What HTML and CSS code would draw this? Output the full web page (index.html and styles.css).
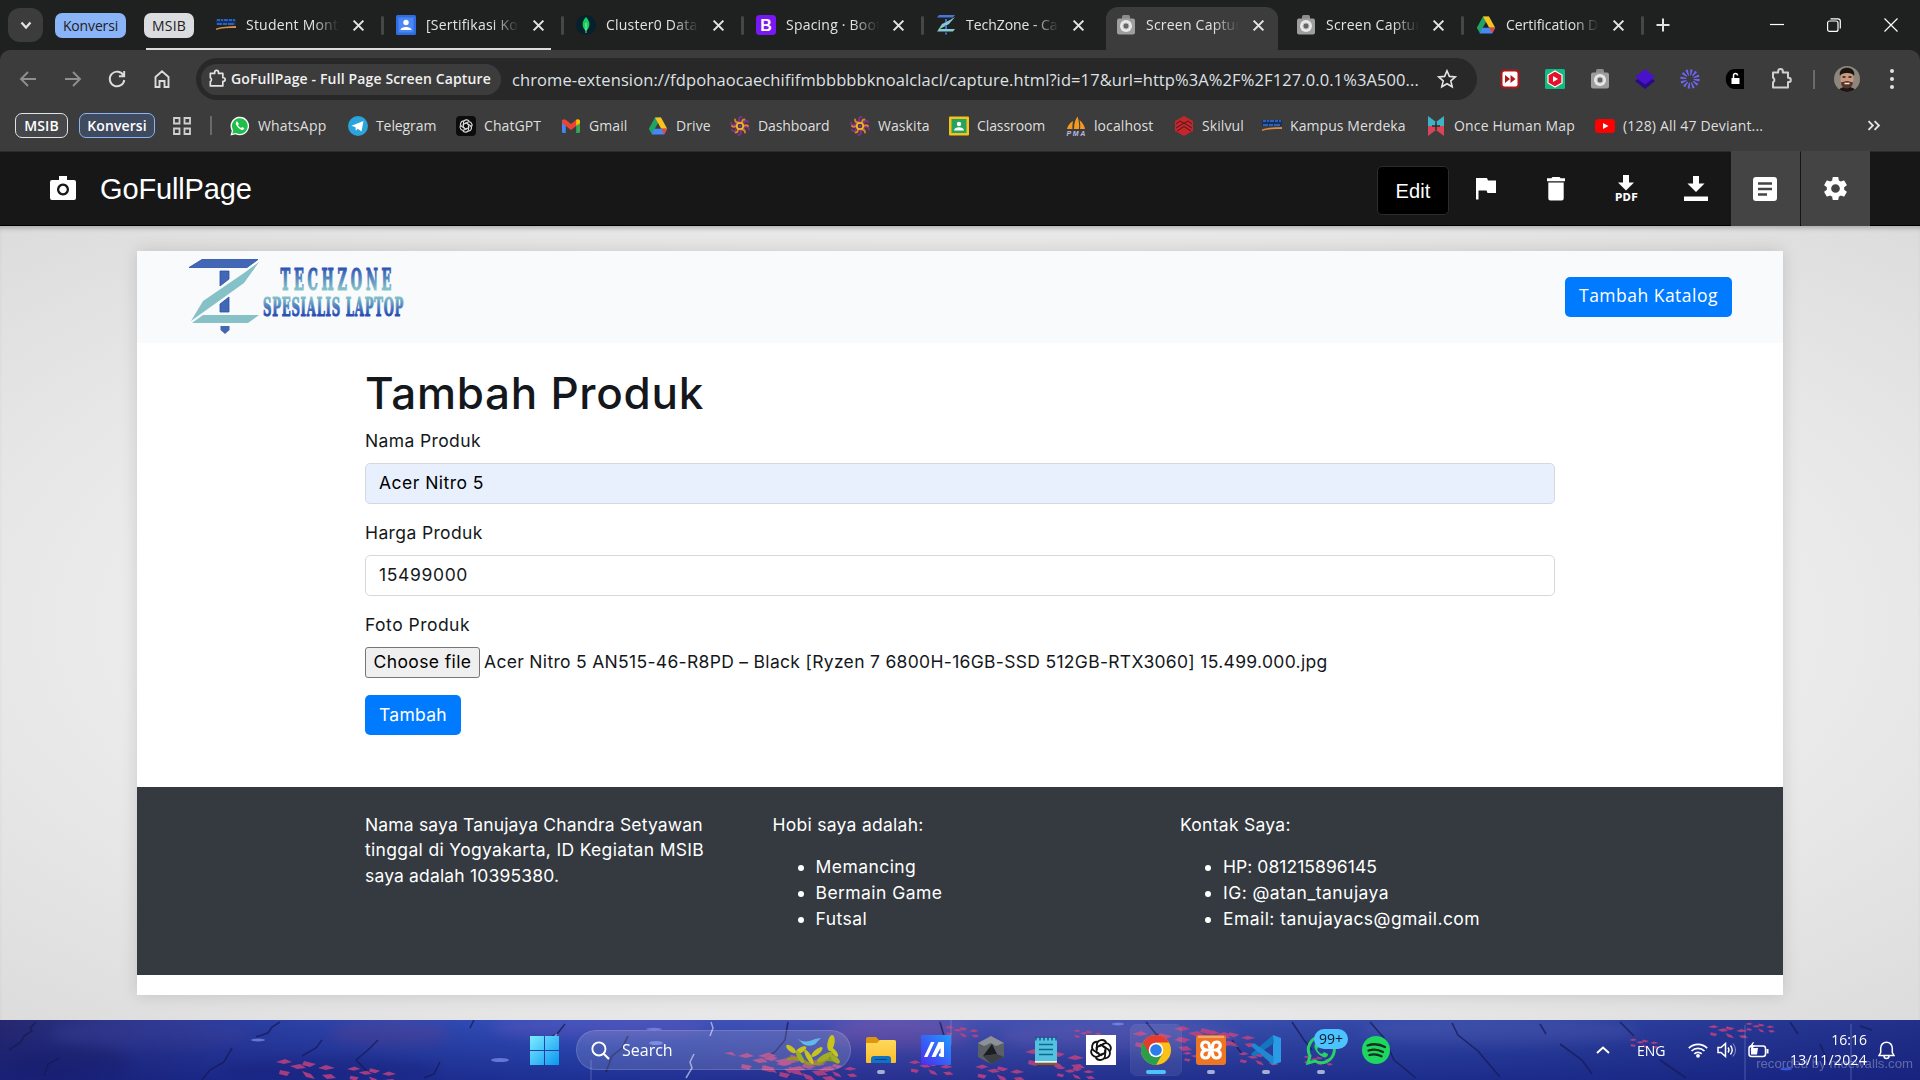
FILE: index.html
```html
<!DOCTYPE html>
<html lang="id">
<head>
<meta charset="utf-8">
<title>GoFullPage</title>
<link rel="stylesheet" href="styles.css">
</head>
<body>
<svg class="defs" width="0" height="0">
  <defs>
    <linearGradient id="gWin" x1="0" y1="0" x2="1" y2="1"><stop offset="0" stop-color="#7cecff"/><stop offset="1" stop-color="#0a96f0"/></linearGradient>
    <linearGradient id="gT1" x1="0" y1="0" x2="0" y2="1"><stop offset=".2" stop-color="#2f55b3"/><stop offset=".8" stop-color="#86c5c9"/></linearGradient>
    <linearGradient id="gT2" x1="0" y1="0" x2="0" y2="1"><stop offset=".2" stop-color="#86c5c9"/><stop offset=".75" stop-color="#2850b5"/></linearGradient>
    <linearGradient id="gMa" x1="0" y1="1" x2="1" y2="0"><stop offset="0" stop-color="#4b2cf0"/><stop offset="1" stop-color="#1f9cff"/></linearGradient>
    <linearGradient id="gFold" x1="0" y1="0" x2="0" y2="1"><stop offset="0" stop-color="#ffd95a"/><stop offset="1" stop-color="#fbbd2b"/></linearGradient>
    <linearGradient id="gSky" x1="0" y1="0" x2="1" y2="0"><stop offset="0" stop-color="#26286f"/><stop offset=".12" stop-color="#2b3da0"/><stop offset=".3" stop-color="#3151bd"/><stop offset=".45" stop-color="#4b52b2"/><stop offset=".6" stop-color="#3c50ae"/><stop offset=".75" stop-color="#3048a8"/><stop offset="1" stop-color="#22308a"/></linearGradient>
    <linearGradient id="gShade" x1="0" y1="0" x2="0" y2="1"><stop offset="0" stop-color="#101a70" stop-opacity="0"/><stop offset="1" stop-color="#101a78" stop-opacity=".6"/></linearGradient>
    <symbol id="x" viewBox="0 0 12 12"><path d="M1.500 1.500l9 9M10.500 1.500l-9 9" stroke="currentColor" stroke-width="1.900" fill="none"/></symbol>
    <symbol id="puzzle" viewBox="0 0 24 24"><path d="M4 6.500h5.200V5.200a2.300 2.300 0 0 1 4.600 0v1.300H19v5.200h.6a2.200 2.200 0 0 1 0 4.400H19V21.500H4v-5.200a2.600 2.600 0 0 0 0-4.600z" fill="none" stroke="currentColor" stroke-width="2" stroke-linejoin="round"/></symbol>
    <symbol id="camera" viewBox="0 0 20 20"><rect x="6" y="0" width="8" height="6" rx="1.500" fill="#8c8c8c"/><rect x="1" y="3.500" width="18" height="16" rx="2" fill="#9e9e9e"/><circle cx="10" cy="11" r="6" fill="#e9e9e9"/><circle cx="10" cy="11" r="3" fill="#666" stroke="#bbb"/></symbol>
    <symbol id="drive" viewBox="0 0 20 20"><path d="M7 1.500h6L10 7 3.800 18 .8 12.800z" fill="#1fa463"/><path d="M7 1.500h6l6.200 11.300h-6z" fill="#fcc31e"/><path d="M6.200 12.800h13l-3 5.700H3.500z" fill="#4688f4"/><path d="M13.200 12.800h6l-3 5.500z" fill="#e8453c"/></symbol>
    <symbol id="gpt" viewBox="0 0 24 24"><g fill="none" stroke="currentColor" stroke-width="1.700"><path d="M8.200 12V7.200a4.600 4.600 0 0 1 8.700-1.900"/><path d="M8.200 12V7.200a4.600 4.600 0 0 1 8.700-1.900" transform="rotate(60 12 12)"/><path d="M8.200 12V7.200a4.600 4.600 0 0 1 8.700-1.900" transform="rotate(120 12 12)"/><path d="M8.200 12V7.200a4.600 4.600 0 0 1 8.700-1.900" transform="rotate(180 12 12)"/><path d="M8.200 12V7.200a4.600 4.600 0 0 1 8.700-1.900" transform="rotate(240 12 12)"/><path d="M8.200 12V7.200a4.600 4.600 0 0 1 8.700-1.900" transform="rotate(300 12 12)"/><path d="M12 7.300l4.100 2.400v4.600L12 16.700l-4.100-2.400V9.700z"/></g></symbol>
    <symbol id="kampus" viewBox="0 0 20 20"><path d="M0 4h20v6H0z" fill="#16305e"/><path d="M1 5h3m1 0h2m1 0h4m1 0h3m1 0h2M1 9h5m1 0h4m1 0h6" stroke="#2a62bd" stroke-width="1.800"/><path d="M0 13.500c6-2 12-2 20-2.500v2c-8 0-14 0-20 2z" fill="#d98c4a"/></symbol>
    <symbol id="swirl" viewBox="0 0 20 20"><g fill="none" stroke-width="1.800" stroke-linecap="round"><g stroke="#84308c"><path d="M10 6c-2-2-1-5 1.500-5M13.500 8c0-3 3-4 4.700-2M14 12c2-2 5-1 5 1.500M10 14c2 2 1 5-1.500 5M6.500 12c0 3-3 4-4.700 2M6 8C4 10 1 9 1 6.500"/></g><g stroke="#d9852c"><path d="M12 6.500c0-2 1-3 2.500-3M14 10c1.500-1 3-1 4 0M12 13.500c1.500 0 3 1 3 3M8 13.500c0 2-1 3-2.500 3M6 10c-1.500 1-3 1-4 0M8 6.500c-1.500 0-3-1-3-3"/></g></g><circle cx="10" cy="10" r="3.200" fill="none" stroke="#f5b52e" stroke-width="1.700"/><circle cx="10" cy="10" r="1.200" fill="#8b2f8f"/></symbol>
    <symbol id="wa" viewBox="0 0 20 20"><path d="M.5 19.500l1.300-4.800A9.300 9.300 0 1 1 5.500 18.200z" fill="#fff"/><path d="M2.300 17.700l.9-3.300A7.900 7.900 0 1 1 6 17z" fill="#1fbe4b"/><path d="M7 5.300c-1.300.5-1.500 2-.8 3.500 1 2.200 2.700 4 5 4.900 1.600.6 2.800 0 3.200-1.400l-2.200-1.300-1.100 1C9.700 11.500 8.500 10.200 8 9l.9-1.100z" fill="#fff"/></symbol>
    <symbol id="leaves" viewBox="0 0 60 24" overflow="visible"><path d="M0 6l9-3 7 3-8 2zM14 10l10-2 6 4-9 1zM28 5l12 3-6 3-8-2zM4 14l10 2-3 4-8-2zM26 15l9 3 4 5-9-2zM42 12l8-3 9 3-9 2zM46 19l9-1 5 4-9 1z"/></symbol>
  </defs>
</svg>

<div class="tabstrip">
  <span class="tabsearch"><svg width="12" height="9" viewBox="0 0 12 9"><path d="M1.500 1.500L6 6.500l4.500-5" fill="none" stroke="#e3e3e3" stroke-width="2.200"/></svg></span>
  <span class="group blue">Konversi</span>
  <span class="group grey">MSIB</span>
  <div class="tabs">
    <div class="tab grouped first"><svg class="fav"><use href="#kampus"/></svg><span class="title">Student Mont</span><svg class="close"><use href="#x"/></svg></div>
    <div class="tab grouped second"><svg class="fav" viewBox="0 0 20 20"><rect width="20" height="20" rx="1.500" fill="#2f6de0"/><rect x="2.500" y="2.500" width="15" height="15" fill="#4a86f5"/><circle cx="10" cy="7.500" r="2.700" fill="#fff"/><path d="M4.500 15c0-4 11-4 11 0z" fill="#fff"/></svg><span class="title">[Sertifikasi Kon</span><svg class="close"><use href="#x"/></svg></div>
    <div class="tab"><svg class="fav" viewBox="0 0 20 20"><circle cx="10" cy="10" r="10" fill="#06202c"/><path d="M10 2c5 5 4 11 0 14-4-3-5-9 0-14z" fill="#13cf5c"/><path d="M10 8v10" stroke="#b9f0c8" stroke-width=".8"/></svg><span class="title">Cluster0 Data</span><svg class="close"><use href="#x"/></svg></div>
    <div class="tab"><svg class="fav" viewBox="0 0 20 20"><rect width="20" height="20" rx="3.500" fill="#7a18f5"/><text x="10" y="16" text-anchor="middle" class="bs">B</text></svg><span class="title">Spacing · Boot</span><svg class="close"><use href="#x"/></svg></div>
    <div class="tab nosep"><svg class="fav" viewBox="0 0 20 20"><path d="M3 0h16l-2 2.500H1z" fill="#4a74d8"/><path d="M19 2L13 9l-11 6 4-6 8-4zM3 14h16l-2 2.500H1z" fill="#86c9d0"/><path d="M10 4v3M10 10v4M10 17.500v2" stroke="#4a74d8" stroke-width="1.800"/></svg><span class="title tight">TechZone - Ca</span><svg class="close"><use href="#x"/></svg></div>
    <div class="tab active nosep"><svg class="fav"><use href="#camera"/></svg><span class="title">Screen Captur</span><svg class="close"><use href="#x"/></svg></div>
    <div class="tab"><svg class="fav"><use href="#camera"/></svg><span class="title">Screen Captur</span><svg class="close"><use href="#x"/></svg></div>
    <div class="tab"><svg class="fav"><use href="#drive"/></svg><span class="title tight">Certification D</span><svg class="close"><use href="#x"/></svg></div>
  </div>
  <svg class="plus" viewBox="0 0 14 14"><path d="M7 .5v13M.5 7h13" stroke="#e3e3e3" stroke-width="2"/></svg>
  <div class="wincontrols">
    <svg width="14" height="14" viewBox="0 0 14 14"><path d="M0 6.500h14" stroke="#fff" stroke-width="1.200"/></svg>
    <svg width="14" height="14" viewBox="0 0 14 14"><rect x=".6" y="3" width="10.400" height="10.400" rx="2" fill="none" stroke="#fff" stroke-width="1.200"/><path d="M3.500 .8H11A2.300 2.300 0 0 1 13.300 3v7.500" fill="none" stroke="#fff" stroke-width="1.200"/></svg>
    <svg width="14" height="14" viewBox="0 0 14 14"><path d="M.5 .5l13 13M13.500 .5l-13 13" stroke="#fff" stroke-width="1.200"/></svg>
  </div>
</div>

<div class="toolbar">
  <div class="navicons">
    <svg class="dim" viewBox="0 0 20 20"><path d="M18 10H3M10 3l-7 7 7 7" /></svg>
    <svg class="dim" viewBox="0 0 20 20"><path d="M2 10h15M10 3l7 7-7 7"/></svg>
    <svg viewBox="0 0 20 20"><path d="M16.500 6.500A7.300 7.300 0 1 0 17.300 11M17.200 2v5.300h-5.300"/></svg>
    <svg viewBox="0 0 20 20"><path d="M3.500 8L10 2.300 16.500 8v10h-4v-6h-5v6h-4z"/></svg>
  </div>
  <div class="omnibox">
    <span class="extchip"><svg class="pz" viewBox="0 0 24 24"><use href="#puzzle"/></svg>GoFullPage - Full Page Screen Capture</span>
    <span class="url">chrome-extension://fdpohaocaechififmbbbbbknoalclacl/capture.html?id=17&amp;url=http%3A%2F%2F127.0.0.1%3A500...</span>
    <svg class="star" viewBox="0 0 20 20"><path d="M10 1.800l2.400 5.600 6 .5-4.600 4 1.400 5.900L10 14.700l-5.200 3.100 1.400-5.900-4.600-4 6-.5z" fill="none" stroke="#e3e3e3" stroke-width="1.600"/></svg>
  </div>
  <div class="exts">
    <svg viewBox="0 0 20 20"><rect x=".5" y=".5" width="19" height="19" rx="4" fill="#b3161a"/><rect x="2.500" y="2.500" width="15" height="15" rx="2" fill="#fff"/><path d="M5 6l5 4-5 4zM10.500 6l5 4-5 4z" fill="#b3161a"/></svg>
    <svg viewBox="0 0 20 20"><rect width="20" height="20" rx="1.500" fill="#12b981"/><path d="M10 2l7 4v8l-7 4-7-4V6z" fill="#e5102a" stroke="#fff" stroke-width="1.200"/><path d="M8 7l5 3-5 3z" fill="#fff"/></svg>
    <svg viewBox="0 0 20 20"><use href="#camera"/></svg>
    <svg viewBox="0 0 20 20"><path d="M10 5l10 7-10 8-10-8z" fill="#2a0a86"/><path d="M10 0l10 8-10 7.500L0 8z" fill="#4a12c8"/></svg>
    <svg viewBox="0 0 20 20"><circle cx="10" cy="10" r="6.700" fill="none" stroke="#6d66f5" stroke-width="6" stroke-dasharray="1.700 1.810"/></svg>
    <svg viewBox="0 0 20 20"><path d="M9 0h10v20H9C-2 19-2 1 9 0z" fill="#000"/><rect x="6.500" y="9" width="8" height="6" fill="#fff"/><path d="M8.500 9V6.500a2 2 0 0 1 4 0" fill="none" stroke="#fff" stroke-width="1.500"/></svg>
    <svg class="pzbig" viewBox="0 0 24 24"><use href="#puzzle"/></svg>
  </div>
  <span class="vsep"></span>
  <svg class="avatar" viewBox="0 0 26 26"><clipPath id="av"><circle cx="13" cy="13" r="13"/></clipPath><g clip-path="url(#av)"><rect width="26" height="26" fill="#8d867c"/><path d="M4 26c1-7 17-7 18 0z" fill="#1c1614"/><ellipse cx="13" cy="13" rx="6.500" ry="8.500" fill="#c99a80"/><path d="M6 10C3 -1 23 -1 20 10c-1-4-13-4-14 0z" fill="#1b1512"/><path d="M8.500 11h3m3 0h3" stroke="#2a1a14" stroke-width="1.500"/><path d="M7 16c1 1 3-1 6-1s5 2 6 1c0 8-12 9-12 0z" fill="#5a3527"/><path d="M10.500 17.500h5" stroke="#eee" stroke-width="1.300"/></g></svg>
  <svg class="dots" viewBox="0 0 4 22"><circle cx="2" cy="3" r="2"/><circle cx="2" cy="11" r="2"/><circle cx="2" cy="19" r="2"/></svg>
</div>

<div class="bookmarks">
  <span class="pill p1">MSIB</span>
  <span class="pill p2">Konversi</span>
  <svg class="gridicon" viewBox="0 0 18 18"><path d="M1 1h5.500v5.500H1zM11.500 1H17v5.500h-5.500zM1 11.500h5.500V17H1zM11.500 11.500H17V17h-5.500z" fill="none" stroke="#d0d0d0" stroke-width="1.800"/></svg>
  <span class="vsep"></span>
  <div class="marks">
    <span class="mark wide"><svg><use href="#wa"/></svg>WhatsApp</span>
    <span class="mark tight"><svg viewBox="0 0 20 20"><circle cx="10" cy="10" r="10" fill="#2ba3dc"/><path d="M3.500 9.800L15.500 5l-2 10.500-3.700-2.700-2 2-.3-3.500z" fill="#fff"/></svg>Telegram</span>
    <span class="mark"><svg viewBox="0 0 20 20" color="#ddd"><rect width="20" height="20" rx="4" fill="#0c0c0c"/><use href="#gpt" x="2" y="2" width="16" height="16"/></svg>ChatGPT</span>
    <span class="mark"><svg viewBox="0 0 20 20"><path d="M1 4h3.800v13H2.500Q1 17 1 15.500z" fill="#4285f4"/><path d="M15.200 4H19v11.500q0 1.500-1.500 1.500h-2.300z" fill="#34a853"/><path d="M1 5q1-3 3.800-1.200L10 8l5.200-4.200Q18 2 19 5v2l-9 7-9-7z" fill="#ea4335"/><path d="M15.200 3.800Q18 2 19 5v2.200l-3.800 2.600z" fill="#fbbc04"/></svg>Gmail</span>
    <span class="mark"><svg><use href="#drive"/></svg>Drive</span>
    <span class="mark tight"><svg><use href="#swirl"/></svg>Dashboard</span>
    <span class="mark"><svg><use href="#swirl"/></svg>Waskita</span>
    <span class="mark tight"><svg viewBox="0 0 20 20"><rect width="20" height="19" y=".5" rx="1" fill="#f8c21a"/><rect x="2.500" y="3" width="15" height="14" fill="#24a45c"/><circle cx="10" cy="8" r="2.200" fill="#fff"/><path d="M5 14.500c0-4.500 10-4.500 10 0z" fill="#fff"/></svg>Classroom</span>
    <span class="mark"><svg viewBox="0 0 20 20"><path d="M8 13c0-5 1-9 3.500-12.500C13 5 13.500 9 13 13zM14 13c.5-4 0-7-.5-9 3 2.500 5 5.500 5.500 9zM1 13c1-4 3-6 6-8-.5 3-.7 5-.5 8z" fill="#f39a1e"/><text x="10" y="19.500" text-anchor="middle" textLength="19" class="pma">PMA</text></svg>localhost</span>
    <span class="mark"><svg viewBox="0 0 20 20"><path d="M10 0l9 5v10l-9 5-9-5V5z" fill="#c4262b"/><path d="M2 8l4-3 4 2.500L14 5l4 3M2 12l8-5 8 5M3 15l7-4.500 7 4.500" fill="none" stroke="#4b1a1c" stroke-width="1"/></svg>Skilvul</span>
    <span class="mark"><svg><use href="#kampus"/></svg>Kampus Merdeka</span>
    <span class="mark wide"><svg viewBox="0 0 20 20"><path d="M2 0l8 6 8-6v10H2z" fill="#3fb3c4"/><path d="M2 20l8-6 8 6V10H2z" fill="#d8455a"/><path d="M6 10h8M10 6v8" stroke="#2b2b2b" stroke-width="1.500"/></svg>Once Human Map</span>
    <span class="mark wide"><svg viewBox="0 0 20 20"><rect y="3" width="20" height="14" rx="3.500" fill="#f00"/><path d="M8 7l5.500 3L8 13z" fill="#fff"/></svg>(128) All 47 Deviant...</span>
  </div>
  <svg class="more" viewBox="0 0 12 10"><path d="M1 1l4 4-4 4M6.500 1l4 4-4 4" fill="none" stroke="#e3e3e3" stroke-width="1.700"/></svg>
</div>

<header class="apphead">
  <svg class="cam" viewBox="0 0 26 24"><path fill-rule="evenodd" d="M9 0h8v4h7q2 0 2 2v16q0 2-2 2H2q-2 0-2-2V6q0-2 2-2h7zM13 7.500a6 6 0 1 0 .01 0zM13 9.800a3.700 3.700 0 1 1-.01 0z" fill="#fff"/></svg>
  <span class="brand">GoFullPage</span>
  <button class="edit">Edit</button>
  <div class="tools">
    <span><svg width="22" height="23" viewBox="0 0 22 23"><path d="M1 1h11l1 2.500h8V16h-8.500l-1-2.500H3.500V22.500H1z" fill="#fff"/></svg></span>
    <span><svg width="18" height="24" viewBox="0 0 18 24"><path d="M5.500 0h7l1.200 1.200H18v3H0v-3h4.300zM1.300 5.500h15.400V21.500q0 2-2 2H3.300q-2 0-2-2z" fill="#fff"/></svg></span>
    <span><svg width="24" height="27" viewBox="0 0 24 27"><path d="M9 0h6v7.500h5l-8 8-8-8h5z" fill="#fff"/><text x="1" y="26" textLength="23" class="pdf">PDF</text></svg></span>
    <span><svg width="24" height="26" viewBox="0 0 24 26"><path d="M9 0h6v7.500h5.500L12 16 3.500 7.500H9zM0 20.500h24V25H0z" fill="#fff"/></svg></span>
    <span class="lit"><svg width="24" height="24" viewBox="0 0 24 24"><path fill-rule="evenodd" d="M3 0h18q3 0 3 3v18q0 3-3 3H3q-3 0-3-3V3q0-3 3-3zM5 5.300v2.400h14V5.300zM5 10.800v2.400h14v-2.400zM5 16.300v2.400h9v-2.400z" fill="#fff"/></svg></span>
    <span class="lit"><svg width="29" height="29" viewBox="0 0 24 24"><path fill="#fff" d="M19.140 12.940c.04-.3.060-.61.060-.94s-.02-.64-.07-.94l2.030-1.580a.49.49 0 0 0 .12-.61l-1.920-3.320a.488.488 0 0 0-.59-.22l-2.390.96c-.5-.38-1.030-.7-1.620-.94l-.36-2.540a.484.484 0 0 0-.48-.41h-3.840c-.24 0-.43.17-.47.41l-.36 2.540c-.59.24-1.130.57-1.620.94l-2.390-.96a.48.48 0 0 0-.59.22L2.740 8.870c-.12.21-.08.47.12.61l2.030 1.580c-.05.3-.09.63-.09.94s.02.64.07.94l-2.030 1.580a.49.49 0 0 0-.12.61l1.920 3.320c.12.22.37.29.59.22l2.390-.96c.5.38 1.030.7 1.620.94l.36 2.540c.05.24.24.41.48.41h3.840c.24 0 .44-.17.47-.41l.36-2.540c.59-.24 1.130-.56 1.620-.94l2.390.96c.22.08.47 0 .59-.22l1.920-3.320a.48.48 0 0 0-.12-.61zM12 15.600A3.600 3.600 0 1 1 12 8.400a3.600 3.600 0 0 1 0 7.200z"/></svg></span>
  </div>
</header>

<main class="canvas">
  <div class="shot">
    <nav class="navbar">
      <svg class="logo" width="220" height="92" viewBox="185 251 220 92">
        <path d="M189 267.500L202 259.500h56l-11 8z" fill="#4367b5" stroke="#2450ae" stroke-width=".8"/>
        <path d="M220 271h9v8l-9 7zM229 297v15h-9v-8z" fill="#4367b5" stroke="#2450ae" stroke-width=".8"/>
        <path d="M259 262L244 283l-53 38 12-20 41-28z" fill="#86c1c7"/>
        <path d="M203 315h56l-11 8h-56z" fill="#86c1c7"/>
        <path d="M220.500 326h9v4l-4.500 4-4.500-4z" fill="#4367b5"/>
        <text class="lt" fill="url(#gT1)" stroke="url(#gT1)" textLength="154" transform="translate(280.500 289.500) scale(.72 1.530)">TECHZONE</text>
        <text class="lt" fill="url(#gT2)" stroke="url(#gT2)" textLength="216" transform="translate(263 315.500) scale(.65 1.330)">SPESIALIS LAPTOP</text>
      </svg>
      <a class="btn katalog">Tambah Katalog</a>
    </nav>
    <section class="form">
      <h1>Tambah Produk</h1>
      <label>Nama Produk</label>
      <div class="input filled">Acer Nitro 5</div>
      <label>Harga Produk</label>
      <div class="input price">15499000</div>
      <label class="foto">Foto Produk</label>
      <div class="file"><span class="choose">Choose file</span><span class="fname">Acer Nitro 5 AN515-46-R8PD – Black [Ryzen 7 6800H-16GB-SSD 512GB-RTX3060] 15.499.000.jpg</span></div>
      <a class="btn submit">Tambah</a>
    </section>
    <footer class="foot">
      <div><p class="bio">Nama saya Tanujaya Chandra Setyawan<br><span class="l2">tinggal di Yogyakarta, ID Kegiatan MSIB</span><br>saya adalah 10395380.</p></div>
      <div><p>Hobi saya adalah:</p><ul><li>Memancing</li><li>Bermain Game</li><li>Futsal</li></ul></div>
      <div><p>Kontak Saya:</p><ul><li class="hp">HP: 081215896145</li><li>IG: @atan_tanujaya</li><li>Email: tanujayacs@gmail.com</li></ul></div>
    </footer>
  </div>
</main>

<div class="taskbar">
  <svg class="wall" viewBox="0 0 1920 60" preserveAspectRatio="none">
    <rect width="1920" height="60" fill="url(#gSky)"/>
    <g class="clouds"><ellipse cx="150" cy="15" rx="100" ry="16" fill="#46479c"/><ellipse cx="390" cy="14" rx="60" ry="14" fill="#6a4790"/><ellipse cx="600" cy="8" rx="110" ry="12" fill="#7a5fc0"/><ellipse cx="900" cy="14" rx="70" ry="16" fill="#9a5fae"/><ellipse cx="1120" cy="18" rx="120" ry="16" fill="#7a6ac0"/><ellipse cx="1500" cy="12" rx="140" ry="14" fill="#5e66b8"/><ellipse cx="330" cy="50" rx="110" ry="12" fill="#1b1f70"/><ellipse cx="70" cy="44" rx="60" ry="18" fill="#1a1c5c"/></g>
    <rect width="1920" height="60" fill="url(#gShade)"/>
    <g fill="none" stroke="#171b55" stroke-width="1.600" opacity=".75"><path d="M36 2l-6 6 2 3-8 5-3 6-12 8M60 38l-12 6-4 12M280 2l-8 5-4 6-12 4M322 20l-6 8-14 8M378 20l-10 10-12 10 14 14M232 28l-8 14-14 8-8 10M474 0l-4 8M440 42l-6 12-10 4M565 4l-8 10-8 4M628 16l-6 12-10 8-6 16M788 2l-3 18-10 12-10 6M940 2l4 14-6 10"/><path d="M1146 2l10 12 10 6M1232 20l10 14M1292 2l12 18 8 10M1370 2l14 16 10 22 22 18M1452 3l6 12 20 16 22 26M1540 4l6 10M1560 24l22 16 10 14M1620 2l14 14M1660 40l26 18M1790 2l8 12M1820 24l8 18M1860 6l12 4"/></g>
    <g fill="none" stroke="#c9cdee" stroke-width="1.500" opacity=".7"><path d="M557 14l-6 6M711 2l2 6-3 8M694 34l-4 8 2 6-6 10"/></g>
    <g fill="#c8437f" opacity=".8">
      <use href="#leaves" x="276" y="36" width="60" height="24"/><use href="#leaves" x="342" y="44" width="60" height="20"/>
      <use href="#leaves" x="738" y="30" width="60" height="24"/><use href="#leaves" x="758" y="28" width="70" height="30"/><use href="#leaves" x="776" y="38" width="60" height="24"/><use href="#leaves" x="812" y="40" width="46" height="18"/>
      <path d="M724 33l8-1 4 4z"/>
      <use href="#leaves" x="942" y="4" width="40" height="14"/><use href="#leaves" x="908" y="38" width="46" height="18"/><use href="#leaves" x="972" y="42" width="56" height="20"/>
      <use href="#leaves" x="1020" y="26" width="70" height="24"/><use href="#leaves" x="1056" y="8" width="64" height="12"/><use href="#leaves" x="1050" y="44" width="50" height="16"/>
      <use href="#leaves" x="1132" y="8" width="60" height="24"/><use href="#leaves" x="1174" y="3" width="60" height="24"/><use href="#leaves" x="1206" y="8" width="50" height="20"/><use href="#leaves" x="1170" y="30" width="60" height="14"/><use href="#leaves" x="1236" y="30" width="44" height="16"/><use href="#leaves" x="1296" y="34" width="44" height="12"/>
      <use href="#leaves" x="1616" y="17" width="56" height="12"/><use href="#leaves" x="1708" y="3" width="40" height="16"/><use href="#leaves" x="1740" y="1" width="40" height="12"/>
    </g>
    <g fill="#7f92ee" opacity=".7"><ellipse cx="258" cy="20" rx="7" ry="1.500"/><ellipse cx="500" cy="40" rx="9" ry="2"/><ellipse cx="656" cy="23" rx="7" ry="2"/><ellipse cx="654" cy="9" rx="8" ry="1.200"/><ellipse cx="1118" cy="4" rx="6" ry="1.500"/><ellipse cx="1786" cy="49" rx="6" ry="1.500" fill="#4466ff"/></g>
    <g stroke="#9aa8e8" opacity=".4"><path d="M591 40v20M951 0v25M1745 5v55M1851 4v56"/></g>
  </svg>
  <svg class="start" viewBox="0 0 29 29"><path d="M0 0h14v14H0zM15 0h14v14H15zM0 15h14v14H0zM15 15h14v14H15z" fill="url(#gWin)"/></svg>
  <div class="search">
    <svg class="lens" viewBox="0 0 18 18"><circle cx="7.500" cy="7.500" r="6.200" fill="none" stroke="#fff" stroke-width="1.800"/><path d="M12 12l5 5" stroke="#fff" stroke-width="2"/></svg>
    <span>Search</span>
    <svg class="bird" viewBox="0 0 56 30"><path d="M2 24q12-2 20 4 10 3 16-2 8-4 16 2" stroke="#8f9a1c" stroke-width="3" fill="none"/><g fill="#c8c41e"><ellipse cx="46" cy="8" rx="3.500" ry="8" transform="rotate(10 46 8)"/><ellipse cx="6" cy="14" rx="6" ry="2.500" transform="rotate(40 6 14)"/><ellipse cx="16" cy="15" rx="6" ry="2.500" transform="rotate(-30 16 15)"/><ellipse cx="24" cy="22" rx="8" ry="2.500" transform="rotate(60 24 22)"/><ellipse cx="32" cy="17" rx="7" ry="2.500" transform="rotate(-40 32 17)"/><ellipse cx="49" cy="17" rx="6" ry="2.200" transform="rotate(50 49 17)"/></g><g fill="#9fae22"><ellipse cx="15" cy="22" rx="7" ry="2.500" transform="rotate(60 15 22)"/><ellipse cx="40" cy="22" rx="9" ry="3" transform="rotate(-30 40 22)"/><ellipse cx="50" cy="24" rx="6" ry="2.500" transform="rotate(40 50 24)"/></g><path d="M12 3c5 5 12 4 18 1l6-1-4 4c-3 5-12 5-16 0z" fill="#62b9e8"/></svg>
  </div>
  <div class="apps">
    <span class="app run"><svg viewBox="0 0 30 30"><path d="M0 4q0-2 2-2h8l3 3h15q2 0 2 2v4H0z" fill="#e0960c"/><path d="M0 8h11l3-3h14q2 0 2 2v20q0 1-1 1H1q-1 0-1-1z" fill="url(#gFold)"/><path d="M5 28v-4q0-3 3-3h14q3 0 3 3v4z" fill="#0f72c4"/><path d="M9 24.500h12" stroke="#06457f"/></svg></span>
    <span class="app"><svg viewBox="0 0 30 30"><rect width="30" height="30" fill="url(#gMa)"/><path d="M3 22L10 7h3.500L6.500 22zM10.500 22l7-15H23v15h-3.500v-9l-5 9z" fill="#fff"/><circle cx="19.500" cy="20" r="1.700" fill="#fff"/></svg></span>
    <span class="app"><svg viewBox="0 0 30 30"><path d="M15 1l13 7v14l-13 7L2 22V8z" fill="#5a6066"/><path d="M15 1l13 7-8 3-5-3-7 3-6-3z" fill="#8b9197"/><path d="M16 9L7 21l14-2z" fill="#1b1d20"/><path d="M21 19l7 3-13 7-8-8z" fill="#3c4045"/></svg></span>
    <span class="app"><svg viewBox="0 0 30 30"><rect x="4" y="26" width="22" height="4" rx="1" fill="#a2510e"/><rect x="4" y="3" width="22" height="25" rx="1.500" fill="#54c1de"/><path d="M4 26h22v1.500H4z" fill="#eef"/><path d="M5 1.500v4M9 1.500v4M13 1.500v4M17 1.500v4M21 1.500v4M25 1.500v4" stroke="#0e5c86" stroke-width="1.500"/><path d="M8 9.500h14M8 14.500h14M8 19.500h14" stroke="#0e6a94" stroke-width="1.600"/></svg></span>
    <span class="app"><svg viewBox="0 0 30 30" color="#111"><rect width="30" height="30" fill="#fff"/><use href="#gpt" x="2" y="2" width="26" height="26"/></svg></span>
    <span class="app act"><svg viewBox="0 0 30 30"><circle cx="15" cy="15" r="15" fill="#fbc116"/><path d="M2 7.500A15 15 0 0 0 15 30l6.500-11.200L15 15z" fill="#2a9e4a"/><path d="M2 7.500L8.500 19l2-8L15 7.500h13A15 15 0 0 0 2 7.500z" fill="#e33b2e"/><circle cx="15" cy="15" r="7.300" fill="#fff"/><circle cx="15" cy="15" r="5.800" fill="#2b7de9"/></svg></span>
    <span class="app run"><svg viewBox="0 0 30 30"><rect width="30" height="30" rx="3" fill="#ee7623"/><path d="M2 2h26" stroke="#f6b48a" stroke-width="1.500"/><path d="M9.500 15C4 13 5 7 9.500 7c3.500 0 4 3 4 5h3c0-2 .5-5 4-5 4.500 0 5.500 6 0 8 5.500 2 4.500 8 0 8-3.500 0-4-3-4-5h-3c0 2-.5 5-4 5C5 23 4 17 9.500 15zM9.500 15h11" fill="none" stroke="#fff" stroke-width="3.200" stroke-linejoin="round"/></svg></span>
    <span class="app run"><svg viewBox="0 0 30 30"><path d="M22 0l8 3v24l-8 3z" fill="#2b9be6"/><path d="M22 0L0 19l3 3 20-14z" fill="#1277c0"/><path d="M22 30L0 11l3-3 20 14z" fill="#1e88d2"/></svg></span>
    <span class="app run"><svg viewBox="0 0 30 30"><path d="M2 28l2-7A13 13 0 1 1 9 26z" fill="none" stroke="#27d366" stroke-width="3"/><path d="M10 8c-2 1-2 4-1 6 2 4 4 6 8 8 2 1 5 0 5-3l-4-2-2 2c-3-1-4-3-5-5l2-2z" fill="#27d366"/></svg><b class="badge">99+</b></span>
    <span class="app"><svg viewBox="0 0 30 30"><circle cx="15" cy="15" r="14" fill="#1ed760"/><path d="M6.500 10.500c6-2 12-1.500 17.500 1.500M7.500 15.500c5-1.500 10-1 14.500 1.500M8.500 20c4-1 8-.7 12 1.300" fill="none" stroke="#12301c" stroke-width="2.300" stroke-linecap="round"/></svg></span>
  </div>
  <div class="tray">
    <svg class="chev" width="14" height="8" viewBox="0 0 14 8"><path d="M1 7l6-5.500L13 7" fill="none" stroke="#fff" stroke-width="2"/></svg>
    <span class="eng">ENG</span>
    <svg class="wifi" width="20" height="16" viewBox="0 0 20 16"><g fill="none" stroke="#fff" stroke-width="1.700"><path d="M.8 6.200a13 13 0 0 1 18.400 0M3.500 9a9.200 9.200 0 0 1 13 0M6.300 11.800a5.300 5.300 0 0 1 7.400 0"/></g><circle cx="10" cy="13.800" r="1.900" fill="#fff"/></svg>
    <svg class="vol" width="20" height="16" viewBox="0 0 20 16"><path d="M1 5.500h3L8.500 1.500v13L4 10.500H1z" fill="none" stroke="#fff" stroke-width="1.500"/><path d="M11 5.500q2 2.500 0 5M13.500 3.500q3.500 4.500 0 9" fill="none" stroke="#fff" stroke-width="1.400"/><path d="M16 1.500q5 6.500 0 13" fill="none" stroke="#8e97cf"/></svg>
    <svg class="bat" width="21" height="17" viewBox="0 0 21 17"><rect x="1" y="4" width="16.500" height="10.500" rx="2.500" fill="none" stroke="#fff" stroke-width="1.500"/><path d="M3 6h7l-1 6.500H3z" fill="#fff"/><path d="M18.500 7v4.500h2V7z" fill="#fff"/><path d="M5 0L1 5.500h2.500L2.500 9 7 3.500H4.500L6 0z" fill="#fff"/></svg>
    <div class="clock"><span>16:16</span><span class="date">13/11/2024</span></div>
    <svg class="bell" width="17" height="19" viewBox="0 0 17 19"><path d="M1 14.500l1.700-3V7a5.800 5.800 0 0 1 11.600 0v4.500l1.700 3zM6 15a2.500 2.500 0 0 0 5 0" fill="none" stroke="#fff" stroke-width="1.500"/></svg>
  </div>
  <span class="watermark">recorded by moewalls.com</span>
</div>
</body>
</html>
```
FILE: styles.css
```css
* { box-sizing: border-box; }
body { margin: 0; width: 1920px; height: 1080px; overflow: hidden; display: flex; flex-direction: column; background: #1f2020; font-family: "Open Sans", "Noto Sans", sans-serif; white-space: nowrap; }
svg { display: block; flex: none; }
.defs { position: absolute; }

.tabstrip { height: 50px; flex: none; display: flex; background: #1f2020; color: #e3e3e3; font-size: 14px; padding-left: 8px; align-items: flex-start; }
.tabsearch { width: 35px; height: 34px; margin-top: 8px; border-radius: 12px; background: #3c3c3c; display: grid; place-items: center; }
.group { height: 25px; margin-top: 13px; border-radius: 7px; display: grid; place-items: center; color: #1f2020; padding-bottom: 1px; }
.group.blue { width: 71px; margin-left: 12px; background: #8ab4f8; letter-spacing: -.15px; }
.group.grey { width: 50px; margin-left: 18px; background: #dadce0; letter-spacing: .15px; }
.tabs { display: flex; margin-left: 12px; height: 50px; }
.tab { width: 180px; height: 50px; padding: 0 0 0 10px; display: flex; align-items: center; position: relative; }
.tab::after { content: ""; position: absolute; left: 175px; top: 16px; width: 3px; height: 19px; background: #454746; border-radius: 2px; }
.tab.nosep::after { display: none; }
.tab.grouped::before { content: ""; position: absolute; height: 2px; bottom: 0; background: #dadce0; left: 0; right: 0; }
.tab.first::before { left: -60px; }
.tab.second::before { right: 15px; }
.fav { width: 20px; height: 20px; }
.title { width: 93px; margin-left: 10px; overflow: hidden; height: 22px; line-height: 22px; letter-spacing: .22px; -webkit-mask-image: linear-gradient(90deg, #000 72%, transparent); mask-image: linear-gradient(90deg, #000 72%, transparent); }
.tight { letter-spacing: -.05px; }
.close { width: 13px; height: 13px; margin-left: 13px; color: #e3e3e3; }
.tab.active { background: #3c3c3c; width: 172px; margin: 7px 8px 0 0; height: 43px; border-radius: 12px 12px 0 0; padding-bottom: 7px; }
.bs { font: 700 16px "Liberation Sans", sans-serif; fill: #fff; }
.plus { width: 14px; height: 14px; margin: 18px 0 0 10px; }
.wincontrols { display: flex; gap: 43px; margin: 18px 0 0 100px; }

.toolbar { height: 58px; flex: none; background: #3c3c3c; display: flex; align-items: center; border-radius: 10px 10px 0 0; }
.navicons { display: flex; gap: 24.600px; padding-left: 18px; width: 196px; }
.navicons svg { width: 20px; height: 20px; fill: none; stroke: #dcdcdc; stroke-width: 1.900; }
.navicons .dim { stroke: #8f8f8f; }
.omnibox { width: 1281px; height: 42px; border-radius: 21px; background: #282828; display: flex; align-items: center; padding-left: 5px; color: #dfe1e5; }
.extchip { width: 300px; height: 31px; border-radius: 16px; background: #3c3c3c; display: flex; align-items: center; padding: 0 0 2px 6px; font-size: 14px; font-weight: 600; color: #f1f1f1; letter-spacing: .14px; }
.pz { width: 20px; height: 20px; margin-right: 4px; color: #e3e3e3; }
.url { margin-left: 11px; width: 925px; font-size: 16.500px; letter-spacing: .1px; }
.star { width: 20px; height: 20px; }
.exts { display: flex; gap: 25px; margin-left: 23px; }
.exts svg { width: 20px; height: 20px; }
.exts .pzbig { width: 24px; height: 24px; margin: -3px 0 0 -1px; color: #d0d0d0; }
.vsep { width: 2px; height: 19px; background: #6a6a6a; }
.toolbar .vsep { margin-left: 20px; }
.avatar { width: 26px; height: 26px; margin-left: 19px; }
.dots { width: 4px; height: 22px; fill: #e3e3e3; margin-left: 30px; }

.bookmarks { height: 43px; flex: none; background: #3c3c3c; display: flex; align-items: center; padding: 0 0 8px 15px; color: #dfdfdf; font-size: 14px; letter-spacing: .08px; }
.pill { height: 25px; border-radius: 7px; border: 1.500px solid #e3e3e3; display: grid; place-items: center; font-weight: 600; color: #fff; }
.p1 { width: 53px; background: #46474a; }
.p2 { width: 76px; margin-left: 11px; border-color: #8ab4f8; background: #404a5e; }
.gridicon { width: 18px; height: 18px; margin-left: 18px; }
.bookmarks .vsep { margin-left: 19px; }
.marks { margin-left: 18px; display: grid; grid-template-columns: 118px 108px 105px 87px 82px 120px 99px 117px 108px 88px 164px 169px 180px; }
.mark { display: flex; align-items: center; gap: 8px; }
.mark.wide { letter-spacing: .18px; }
.mark.tight { letter-spacing: -.09px; }
.mark svg { width: 20px; height: 20px; }
.pma { font: italic 700 7px "Liberation Sans", sans-serif; fill: #b9bde8; }
.more { width: 14px; height: 11px; margin-left: 92px; }

.apphead { height: 75px; flex: none; background: #171717; border-top: 1px solid #2b2b2b; border-bottom: 1px solid #000; display: flex; align-items: center; font-family: "Liberation Sans", sans-serif; color: #fff; padding-left: 50px; }
.cam { width: 26px; height: 24px; margin-top: -2px; }
.brand { margin-left: 24px; width: 1277px; font-size: 29px; letter-spacing: -.15px; padding-top: 1px; }
.edit { width: 72px; height: 49px; margin: 3px 0 0; background: #000; border: 1px solid #2c2c2c; border-radius: 5px; color: #fff; font: 20px "Liberation Sans", sans-serif; letter-spacing: .1px; padding: 2px 0 0; }
.tools { display: flex; height: 75px; margin-left: 1.500px; }
.tools span { width: 70px; display: grid; place-items: center; }
.tools .lit { width: 69px; background: #444; margin-right: 1px; }
.pdf { font: 700 10px "DejaVu Sans", sans-serif; fill: #fff; }

.canvas { height: 794px; flex: none; padding: 25px 137px; background: radial-gradient(ellipse at center, #f4f4f4 0%, #ececec 60%, #dcdcdc 100%); box-shadow: inset 0 5px 5px -3px rgba(0,0,0,.25); }
.shot { height: 744px; background: #fff; box-shadow: 0 0 16px rgba(0,0,0,.14); display: flex; flex-direction: column; font-family: Inter, sans-serif; font-size: 17.500px; letter-spacing: .38px; color: #14181c; }
.navbar { height: 92px; background: #f8fafc; display: flex; justify-content: space-between; align-items: center; padding: 0 51px 0 48px; }
.lt { font: 700 20px "DejaVu Serif Condensed", "DejaVu Serif", serif; letter-spacing: 0; stroke-width: .8px; }
.btn { background: #007bff; color: #fff; border-radius: 5px; height: 40px; display: grid; place-items: center; }
.katalog { width: 167px; font-family: "Open Sans", sans-serif; padding-bottom: 5px; letter-spacing: .49px; }
.form { padding: 23px 228px 0; height: 444px; display: flex; flex-direction: column; }
h1 { margin: 0; font-size: 44px; font-weight: 500; line-height: 54px; height: 62px; letter-spacing: .72px; }
label { height: 35px; line-height: 25px; }
.input { height: 41px; border: 1px solid #d3d9df; border-radius: 5px; padding-left: 13px; line-height: 37px; margin-bottom: 16px; flex: none; }
.input.filled { background: #e8f0fe; letter-spacing: .47px; color: #000; }
.price { letter-spacing: .64px; }
.foto { letter-spacing: .48px; }
.file { display: flex; align-items: center; height: 31px; }
.choose { width: 115px; height: 31px; border: 1px solid #767676; border-radius: 3px; background: #efefef; display: grid; place-items: center; margin-right: 4px; flex: none; padding-bottom: 2px; color: #000; }
.fname { letter-spacing: .31px; padding-bottom: 2px; }
.submit { width: 96px; margin-top: 17px; letter-spacing: .29px; padding-bottom: 2px; }
.foot { height: 188px; background: #343a40; color: #fff; padding: 24.500px 228px 0; display: grid; grid-template-columns: 407.500px 407.500px 1fr; line-height: 25.700px; letter-spacing: .27px; }
.foot p { margin: 0 0 17px; }
.foot ul { margin: 0; padding-left: 43px; letter-spacing: .44px; }
.bio { letter-spacing: .16px; }
.l2 { letter-spacing: .33px; }
.hp { letter-spacing: .05px; }

.taskbar { height: 60px; flex: none; position: relative; z-index: 0; display: flex; align-items: center; color: #fff; padding-left: 530px; }
.wall { position: absolute; left: 0; top: 0; width: 1920px; height: 60px; z-index: -1; }
.clouds { opacity: .35; filter: blur(6px); }
.start { width: 29px; height: 29px; }
.search { width: 275px; height: 40px; margin-left: 17px; border-radius: 20px; background: rgba(255,255,255,.14); border: 1px solid rgba(255,255,255,.14); display: flex; align-items: center; padding-left: 14px; font-size: 16px; }
.lens { width: 19px; height: 19px; margin-right: 12px; }
.bird { width: 56px; height: 30px; margin-left: 112px; }
.apps { display: flex; margin-left: 5px; gap: 5px; }
.app { width: 50px; height: 50px; display: grid; place-items: center; position: relative; border-radius: 5px; }
.app svg { width: 30px; height: 30px; }
.app.run::after, .app.act::after { content: ""; position: absolute; left: 21px; bottom: 1px; width: 8px; height: 4px; border-radius: 2px; background: #a4aed6; }
.app.act { background: rgba(255,255,255,.08); outline: 1px solid rgba(255,255,255,.1); }
.app.act::after { left: 15px; width: 20px; background: #4cc2ff; }
.badge { position: absolute; left: 18px; top: 4px; width: 34px; height: 20px; border-radius: 10px; background: #4cc2ff; color: #0b1a2c; font-weight: 400; font-size: 14px; line-height: 20px; text-align: center; }
.tray { display: flex; align-items: center; margin-left: 195px; font-size: 14px; }
.eng { margin-left: 27px; width: 29px; }
.wifi { margin-left: 22px; }
.vol { margin-left: 9px; }
.bat { margin-left: 11px; }
.clock { width: 98px; display: flex; flex-direction: column; align-items: flex-end; line-height: 20px; }
.date { letter-spacing: .27px; }
.bell { margin-left: 11px; }
.watermark { position: absolute; right: 7px; top: 35px; font: 13.200px/18px "Liberation Sans", sans-serif; color: rgba(255,255,255,.3); }
```
